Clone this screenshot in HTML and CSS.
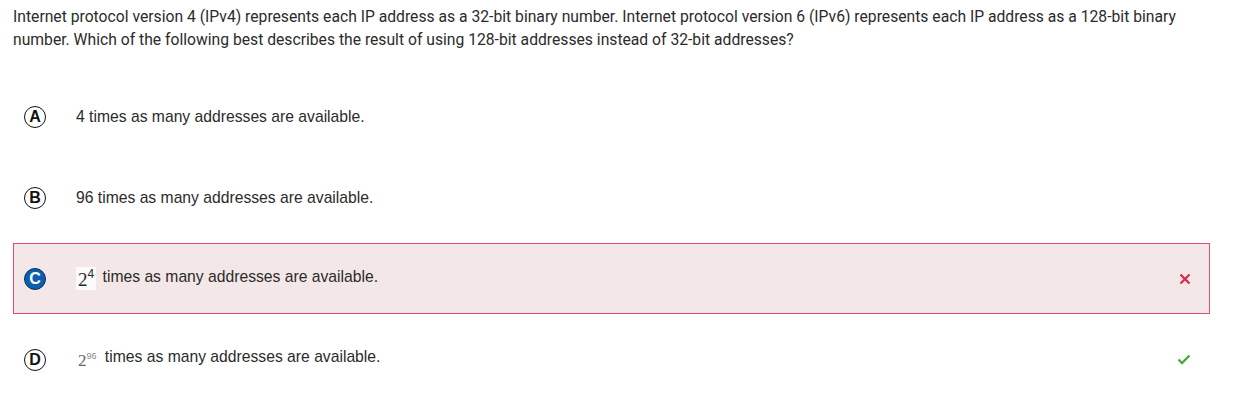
FILE: index.html
```html
<!DOCTYPE html>
<html>
<head>
<meta charset="utf-8">
<link rel="stylesheet" href="styles.css">
</head>
<body>
<div class="page">
  <p class="question">Internet protocol version 4 (IPv4) represents each IP address as a 32-bit binary number. Internet protocol version 6 (IPv6) represents each IP address as a 128-bit binary number. Which of the following best describes the result of using 128-bit addresses instead of 32-bit addresses?</p>
  <div class="options">
    <div class="option">
      <span class="letter">A</span>
      <span class="text">4 times as many addresses are available.</span>
    </div>
    <div class="option">
      <span class="letter">B</span>
      <span class="text">96 times as many addresses are available.</span>
    </div>
    <div class="option option-wrong">
      <span class="letter letter-selected">C</span>
      <span class="text"><span class="math math-box">2<sup>4</sup></span> times as many addresses are available.</span>
      <svg class="mark" width="12" height="12" viewBox="0 0 12 12"><path d="M1.5 1.5 L10.5 10.5 M10.5 1.5 L1.5 10.5" stroke="#d62a4a" stroke-width="2.2" fill="none"/></svg>
    </div>
    <div class="option">
      <span class="letter">D</span>
      <span class="text"><span class="math math-grey">2<sup>96</sup></span> times as many addresses are available.</span>
      <svg class="mark" width="14" height="11" viewBox="0 0 14 11"><path d="M1.5 5.5 L5 9 L12.5 1.5" stroke="#4caa3c" stroke-width="2.4" fill="none"/></svg>
    </div>
  </div>
</div>
</body>
</html>
```
FILE: styles.css
```css
html, body {
  margin: 0;
  padding: 0;
  background: #ffffff;
}
.page {
  padding: 5px 30px 0 13px;
}
.question {
  margin: 0;
  font-family: Roboto, "Liberation Sans", sans-serif;
  font-size: 15.7px;
  line-height: 23px;
  color: #2b2b2b;
}
.options {
  margin-top: 30px;
  display: flex;
  flex-direction: column;
  gap: 10px;
  width: 1197px;
}
.option {
  height: 71px;
  box-sizing: border-box;
  border: 1px solid transparent;
  display: flex;
  align-items: center;
  padding-left: 10px;
  padding-right: 18px;
  font-family: "Liberation Sans", Arial, sans-serif;
  font-size: 15.7px;
  color: #2b2b2b;
}
.option-wrong {
  background: #f3e7e7;
  border: 1px solid #e0506a;
}
.letter {
  width: 20px;
  height: 20px;
  border: 1.7px solid #111111;
  border-radius: 50%;
  display: flex;
  align-items: center;
  justify-content: center;
  font-family: "Liberation Sans", Arial, sans-serif;
  font-weight: bold;
  font-size: 16px;
  color: #111111;
  flex: none;
}
.letter-selected {
  background: #0a5fb0;
  border-color: #0b2f5a;
  color: #ffffff;
}
.text {
  margin-left: 30px;
  flex: 1;
}
.math {
  font-family: "Liberation Serif", "Times New Roman", serif;
  display: inline-block;
  padding: 2px 2px 0 2px;
  margin-right: 2px;
  vertical-align: -4px;
  line-height: 21px;
}
.math sup {
  font-family: "Liberation Sans", Arial, sans-serif;
  font-size: 12px;
  vertical-align: 8px;
  line-height: 0;
}
.math-box {
  background: #fbfbfb;
  color: #2a2a2a;
  font-size: 19px;
}
.math-grey {
  color: #666666;
  font-size: 17px;
}
.math-grey sup {
  font-size: 9px;
  color: #888888;
  vertical-align: 7px;
}
.mark {
  flex: none;
}
```
